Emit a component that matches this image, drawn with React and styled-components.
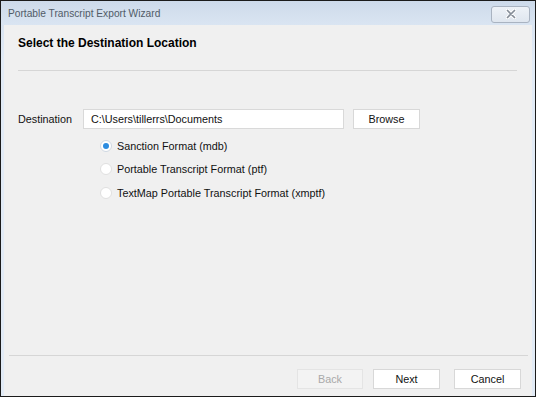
import React, { useState } from 'react'
import styled, { createGlobalStyle } from 'styled-components'

const GlobalStyle = createGlobalStyle`
  html, body {
    margin: 0;
    padding: 0;
    background: #ffffff;
  }
  * {
    box-sizing: border-box;
  }
`

const Window = styled.div`
  width: 536px;
  height: 397px;
  border: 1px solid #1b1b1b;
  background: linear-gradient(#d3dfee, #e2ebf6 60px, #e2ebf6);
  display: flex;
  flex-direction: column;
  font-family: "Liberation Sans", Arial, sans-serif;
  font-size: 10.8px;
  color: #111;
`

const TitleBar = styled.div`
  height: 24px;
  display: flex;
  align-items: center;
  justify-content: space-between;
  padding: 0 5px 0 7px;
  background: linear-gradient(#cddaea, #dae5f2);
`

const TitleText = styled.span`
  color: #515b67;
  font-size: 10.2px;
  margin-top: 1px;
`

const CloseButton = styled.div`
  width: 39px;
  height: 17px;
  margin-top: 2px;
  border: 1px solid #a9b3c1;
  border-radius: 3px;
  background: linear-gradient(#eef2f7, #dfe6ef);
  display: flex;
  align-items: center;
  justify-content: center;
`

const Client = styled.div`
  flex: 1;
  margin: 0 3px;
  background: #f0f0f0;
  display: flex;
  flex-direction: column;
`

const Header = styled.div`
  padding: 10px 15px 0 14px;
`

const HeaderTitle = styled.div`
  font-weight: 700;
  font-size: 12px;
  line-height: 16px;
  color: #000;
`

const Rule = styled.div`
  height: 1px;
  background: #d6d6d6;
  margin: ${p => p.$margin || '0'};
`

const Body = styled.div`
  flex: 1;
  padding: 38px 14px 0 14px;
`

const FieldRow = styled.div`
  display: flex;
  align-items: center;
  height: 20px;
`

const Label = styled.span`
  width: 65px;
`

const TextInput = styled.div`
  width: 261px;
  height: 20px;
  background: #fff;
  border: 1px solid #d9d9d9;
  padding-left: 7px;
  display: flex;
  align-items: center;
`

const Button = styled.div`
  width: ${p => p.$width || 66}px;
  height: 20px;
  margin-left: ${p => p.$gap || 0}px;
  background: ${p => (p.$disabled ? '#f3f3f3' : '#ffffff')};
  border: 1px solid ${p => (p.$disabled ? '#e4e4e4' : '#d8d8d8')};
  color: ${p => (p.$disabled ? '#a9a9a9' : '#111')};
  display: flex;
  align-items: center;
  justify-content: center;
`

const RadioGroup = styled.div`
  margin-top: 5px;
  padding-left: 82px;
  display: flex;
  flex-direction: column;
`

const RadioRow = styled.div`
  height: 23.5px;
  display: flex;
  align-items: center;
  gap: 5px;
  cursor: default;
`

const RadioCircle = styled.span`
  width: 12px;
  height: 12px;
  border-radius: 50%;
  background: #fff;
  border: 1px solid ${p => (p.$checked ? '#cfd8e2' : '#e0e0e0')};
  display: flex;
  align-items: center;
  justify-content: center;

  &::after {
    content: '';
    width: 6px;
    height: 6px;
    border-radius: 50%;
    background: ${p => (p.$checked ? '#2b8ce0' : 'transparent')};
  }
`

const Footer = styled.div`
  display: flex;
  flex-direction: column;
`

const ButtonRow = styled.div`
  display: flex;
  justify-content: flex-end;
  padding: 13px 11px 7px 0;
`

const formats = [
  'Sanction Format (mdb)',
  'Portable Transcript Format (ptf)',
  'TextMap Portable Transcript Format (xmptf)',
]

const CloseIcon = () => (
  <svg width="12" height="10" viewBox="0 0 12 10">
    <path d="M2.5 1.5 L9.5 8.5 M9.5 1.5 L2.5 8.5" stroke="#ffffff" strokeWidth="3.4" strokeLinecap="round" />
    <path d="M2.5 1.5 L9.5 8.5 M9.5 1.5 L2.5 8.5" stroke="#858d98" strokeWidth="1.7" strokeLinecap="round" />
  </svg>
)

const App = () => {
  const [format, setFormat] = useState(0)

  return (
    <>
      <GlobalStyle />
      <Window>
        <TitleBar>
          <TitleText>Portable Transcript Export Wizard</TitleText>
          <CloseButton>
            <CloseIcon />
          </CloseButton>
        </TitleBar>
        <Client>
          <Header>
            <HeaderTitle>Select the Destination Location</HeaderTitle>
            <Rule $margin="19px 0 0 0" />
          </Header>
          <Body>
            <FieldRow>
              <Label>Destination</Label>
              <TextInput>C:\Users\tillerrs\Documents</TextInput>
              <Button $width={67} $gap={9}>Browse</Button>
            </FieldRow>
            <RadioGroup>
              {formats.map((f, i) => (
                <RadioRow key={f} onClick={() => setFormat(i)}>
                  <RadioCircle $checked={format === i} />
                  <span>{f}</span>
                </RadioRow>
              ))}
            </RadioGroup>
          </Body>
          <Footer>
            <Rule $margin="0 4px 0 5px" />
            <ButtonRow>
              <Button $disabled>Back</Button>
              <Button $gap={10} $width={67}>Next</Button>
              <Button $gap={14} $width={67}>Cancel</Button>
            </ButtonRow>
          </Footer>
        </Client>
      </Window>
    </>
  )
}

export default App
